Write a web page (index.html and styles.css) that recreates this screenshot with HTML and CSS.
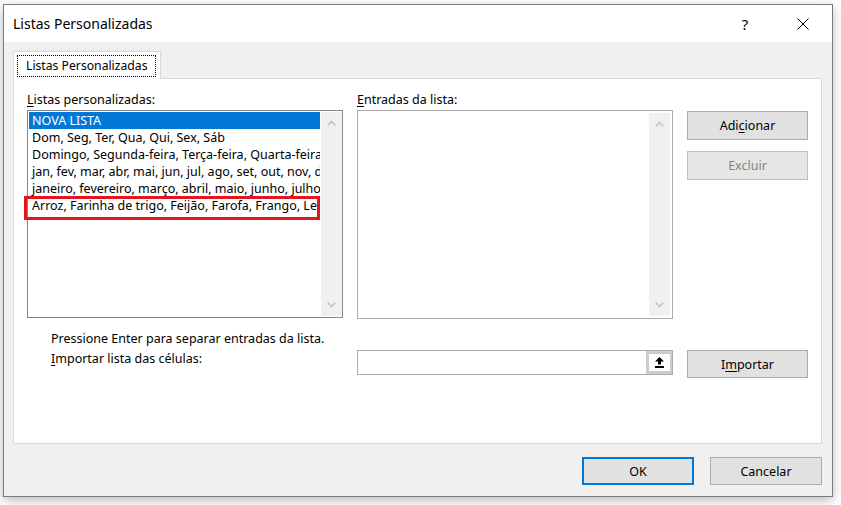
FILE: index.html
```html
<!DOCTYPE html>
<html lang="pt">
<head>
    <meta charset="UTF-8">
    <title>Listas Personalizadas</title>
    <link rel="stylesheet" href="styles.css">
</head>
<body>
    <div class="window">
        <div class="titlebar">
            <span class="title">Listas Personalizadas</span>
            <span class="help">?</span>
            <svg class="close" width="12" height="12" viewBox="0 0 12 12">
                <path d="M0.5 0.5 L11.5 11.5 M11.5 0.5 L0.5 11.5" stroke="#000" stroke-width="1" fill="none"/>
            </svg>
        </div>
        <div class="dialog-body">
            <div class="tabs">
                <div class="tab"><span class="tab-focus">Listas Personalizadas</span></div>
            </div>
            <div class="panel">
                <div class="row-top">
                    <div class="col">
                        <div class="label"><u>L</u>istas personalizadas:</div>
                        <div class="listbox">
                            <div class="items">
                                <div class="item selected">NOVA LISTA</div>
                                <div class="item">Dom, Seg, Ter, Qua, Qui, Sex, Sáb</div>
                                <div class="item">Domingo, Segunda-feira, Terça-feira, Quarta-feira, Quinta-feira, Sexta-feira, Sábado</div>
                                <div class="item">jan, fev, mar, abr, mai, jun, jul, ago, set, out, nov, dez</div>
                                <div class="item">janeiro, fevereiro, março, abril, maio, junho, julho, agosto, setembro</div>
                                <div class="item">Arroz, Farinha de trigo, Feijão, Farofa, Frango, Legumes</div>
                            </div>
                            <div class="scrollbar">
                                <svg width="9" height="6" viewBox="0 0 9 6"><path d="M0.7 5.3 L4.5 1.5 L8.3 5.3" stroke="#c4c4c4" stroke-width="1.6" fill="none"/></svg>
                                <svg width="9" height="6" viewBox="0 0 9 6"><path d="M0.7 0.7 L4.5 4.5 L8.3 0.7" stroke="#c4c4c4" stroke-width="1.6" fill="none"/></svg>
                            </div>
                            <div class="highlight"></div>
                        </div>
                    </div>
                    <div class="col">
                        <div class="label"><u>E</u>ntradas da lista:</div>
                        <div class="entries">
                            <div class="entries-text"></div>
                            <div class="scrollbar">
                                <svg width="9" height="6" viewBox="0 0 9 6"><path d="M0.7 5.3 L4.5 1.5 L8.3 5.3" stroke="#c4c4c4" stroke-width="1.6" fill="none"/></svg>
                                <svg width="9" height="6" viewBox="0 0 9 6"><path d="M0.7 0.7 L4.5 4.5 L8.3 0.7" stroke="#c4c4c4" stroke-width="1.6" fill="none"/></svg>
                            </div>
                        </div>
                    </div>
                    <div class="col-buttons">
                        <button class="button">Adi<u>c</u>ionar</button>
                        <button class="button disabled">Excluir</button>
                    </div>
                </div>
                <div class="row-bottom">
                    <div class="col hint">
                        <div>Pressione Enter para separar entradas da lista.</div>
                        <div><u>I</u>mportar lista das células:</div>
                    </div>
                    <div class="col import-col">
                        <div class="ref-input">
                            <div class="ref-field"></div>
                            <div class="ref-button">
                                <svg width="9" height="11" viewBox="0 0 9 11">
                                    <path d="M4.5 0 L9 4.5 L6 4.5 L6 7.5 L3 7.5 L3 4.5 L0 4.5 Z" fill="#000"/>
                                    <rect x="0" y="9" width="9" height="2" fill="#000"/>
                                </svg>
                            </div>
                        </div>
                    </div>
                    <div class="col-buttons import-col">
                        <button class="button">I<u>m</u>portar</button>
                    </div>
                </div>
            </div>
            <div class="footer">
                <button class="button footer-button default">OK</button>
                <button class="button footer-button">Cancelar</button>
            </div>
        </div>
    </div>
</body>
</html>
```

FILE: styles.css
```css
* {
    margin: 0;
    padding: 0;
    box-sizing: border-box;
}

body {
    font-family: "Noto Sans", "Open Sans", sans-serif;
    font-size: 12.5px;
    color: #000;
    background: #fff;
    width: 841px;
    height: 505px;
    overflow: hidden;
}

u {
    text-decoration: underline;
    text-underline-offset: 2px;
}

.window {
    width: 830px;
    height: 493px;
    margin: 4px 0 0 3px;
    border: 1px solid #7a7a7a;
    background: #f0f0f0;
    box-shadow: 0 3px 10px rgba(0, 0, 0, 0.28);
    display: flex;
    flex-direction: column;
}

.titlebar {
    height: 37px;
    background: #fff;
    display: flex;
    align-items: center;
    padding-left: 9px;
    flex-shrink: 0;
}

.title {
    flex: 1;
    font-size: 14px;
}

.help {
    width: 20px;
    text-align: center;
    font-size: 15px;
}

.close {
    margin-left: 42px;
    margin-right: 23px;
}

.dialog-body {
    flex: 1;
    padding: 9px 10px 0 9px;
}

.tabs {
    display: flex;
}

.tab {
    position: relative;
    z-index: 1;
    background: #fff;
    border: 1px solid #d9d9d9;
    border-bottom: none;
    padding: 3px 4px 2px 3px;
    margin-bottom: -1px;
    font-size: 12.2px;
}

.tab-focus {
    display: block;
    border: 1px dotted #000;
    padding: 2px 7px 2px 8px;
    line-height: 16px;
}

.panel {
    height: 366px;
    background: #fff;
    border: 1px solid #d9d9d9;
    padding: 13px 12px 0 13px;
}

.row-top, .row-bottom {
    display: flex;
    gap: 14px;
}

.col {
    width: 316px;
}

.label {
    line-height: 16px;
    margin-bottom: 2px;
}

.listbox {
    position: relative;
    height: 208px;
    border: 1px solid #828790;
    display: flex;
}

.items {
    flex: 1;
    overflow: hidden;
    padding: 1px;
}

.item {
    line-height: 17px;
    padding-left: 3px;
    white-space: nowrap;
    overflow: hidden;
}

.item.selected {
    background: #0078d7;
    color: #fff;
}

.scrollbar {
    width: 21px;
    background: #f0f0f0;
    display: flex;
    flex-direction: column;
    justify-content: space-between;
    align-items: center;
    padding: 8px 0;
    margin: 1px 0;
}

.highlight {
    position: absolute;
    left: -4px;
    top: 85px;
    width: 296px;
    height: 24px;
    border: 3px solid #e3151e;
}

.entries {
    height: 209px;
    border: 1px solid #acacac;
    display: flex;
    padding: 1px 2px 1px 0;
}

.entries-text {
    flex: 1;
}

.col-buttons {
    width: 121px;
    padding-top: 19px;
    display: flex;
    flex-direction: column;
    gap: 11px;
}

.button {
    font-family: inherit;
    font-size: 12.5px;
    color: #000;
    background: #e1e1e1;
    border: 1px solid #adadad;
    height: 29px;
    width: 100%;
}

.button.disabled {
    color: #838383;
    background: #e6e6e6;
    border-color: #bfbfbf;
}

.row-bottom {
    margin-top: 12px;
}

.hint {
    padding-left: 24px;
    display: flex;
    flex-direction: column;
    gap: 4px;
    line-height: 16px;
}

.import-col {
    padding-top: 19px;
}

.import-col .button {
    height: 28px;
}

.ref-input {
    width: 316px;
    height: 25px;
    border: 1px solid #acacac;
    background: #fff;
    display: flex;
}

.ref-field {
    flex: 1;
}

.ref-button {
    width: 26px;
    border: 3px solid #cdcdcd;
    border-right-width: 2px;
    background: #fff;
    display: flex;
    align-items: center;
    justify-content: center;
}

.footer {
    display: flex;
    justify-content: flex-end;
    gap: 16px;
    padding: 13px 0 0 0;
}

.footer-button {
    width: 112px;
    height: 28px;
}

.footer-button.default {
    border: 2px solid #0078d7;
}
```
